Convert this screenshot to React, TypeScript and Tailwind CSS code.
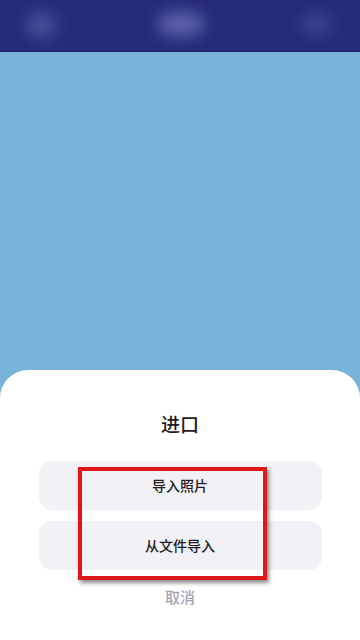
import React from "react";

export default function App() {
  return (
    <div
      className="relative flex h-[640px] w-[360px] flex-col overflow-hidden bg-[#78b4da]"
      style={{ fontFamily: '"Noto Sans CJK SC", "Noto Sans", sans-serif' }}
    >
      <div className="relative h-[52px] shrink-0 overflow-hidden bg-[#262b79] border-b border-[#1f2466]">
        <div className="absolute left-[26px] top-[12px] h-[26px] w-[30px] rounded-full bg-[#5a5fa8] opacity-70 blur-[8px]" />
        <div className="absolute left-[158px] top-[12px] h-[24px] w-[46px] rounded-full bg-[#6a6fb6] opacity-80 blur-[8px]" />
        <div className="absolute left-[302px] top-[13px] h-[22px] w-[30px] rounded-full bg-[#4a4f9c] opacity-70 blur-[8px]" />
      </div>
      <div className="flex-1" />
      <div className="relative flex h-[270px] shrink-0 flex-col items-center rounded-t-[28px] bg-white">
        <div className="mt-[40px] text-[19px] font-medium leading-[28px] text-[#1c1c22]">进口</div>
        <div className="mt-[23px] flex w-[283px] flex-col gap-[11px]">
          <div className="flex h-[49px] items-center justify-center rounded-[13px] bg-[#f2f2f6] text-[14px] font-medium text-[#1c1c22]">
            导入照片
          </div>
          <div className="flex h-[49px] items-center justify-center rounded-[13px] bg-[#f2f2f6] text-[14px] font-medium text-[#1c1c22]">
            从文件导入
          </div>
        </div>
        <div className="mt-[17px] text-[15px] font-medium leading-[20px] text-[#a3a3b5]">取消</div>
        <div className="absolute left-[78px] top-[97px] h-[113px] w-[189px] border-[4px] border-[#e0161b] shadow-[2px_3px_4px_rgba(0,0,0,0.45)]" />
      </div>
    </div>
  );
}
